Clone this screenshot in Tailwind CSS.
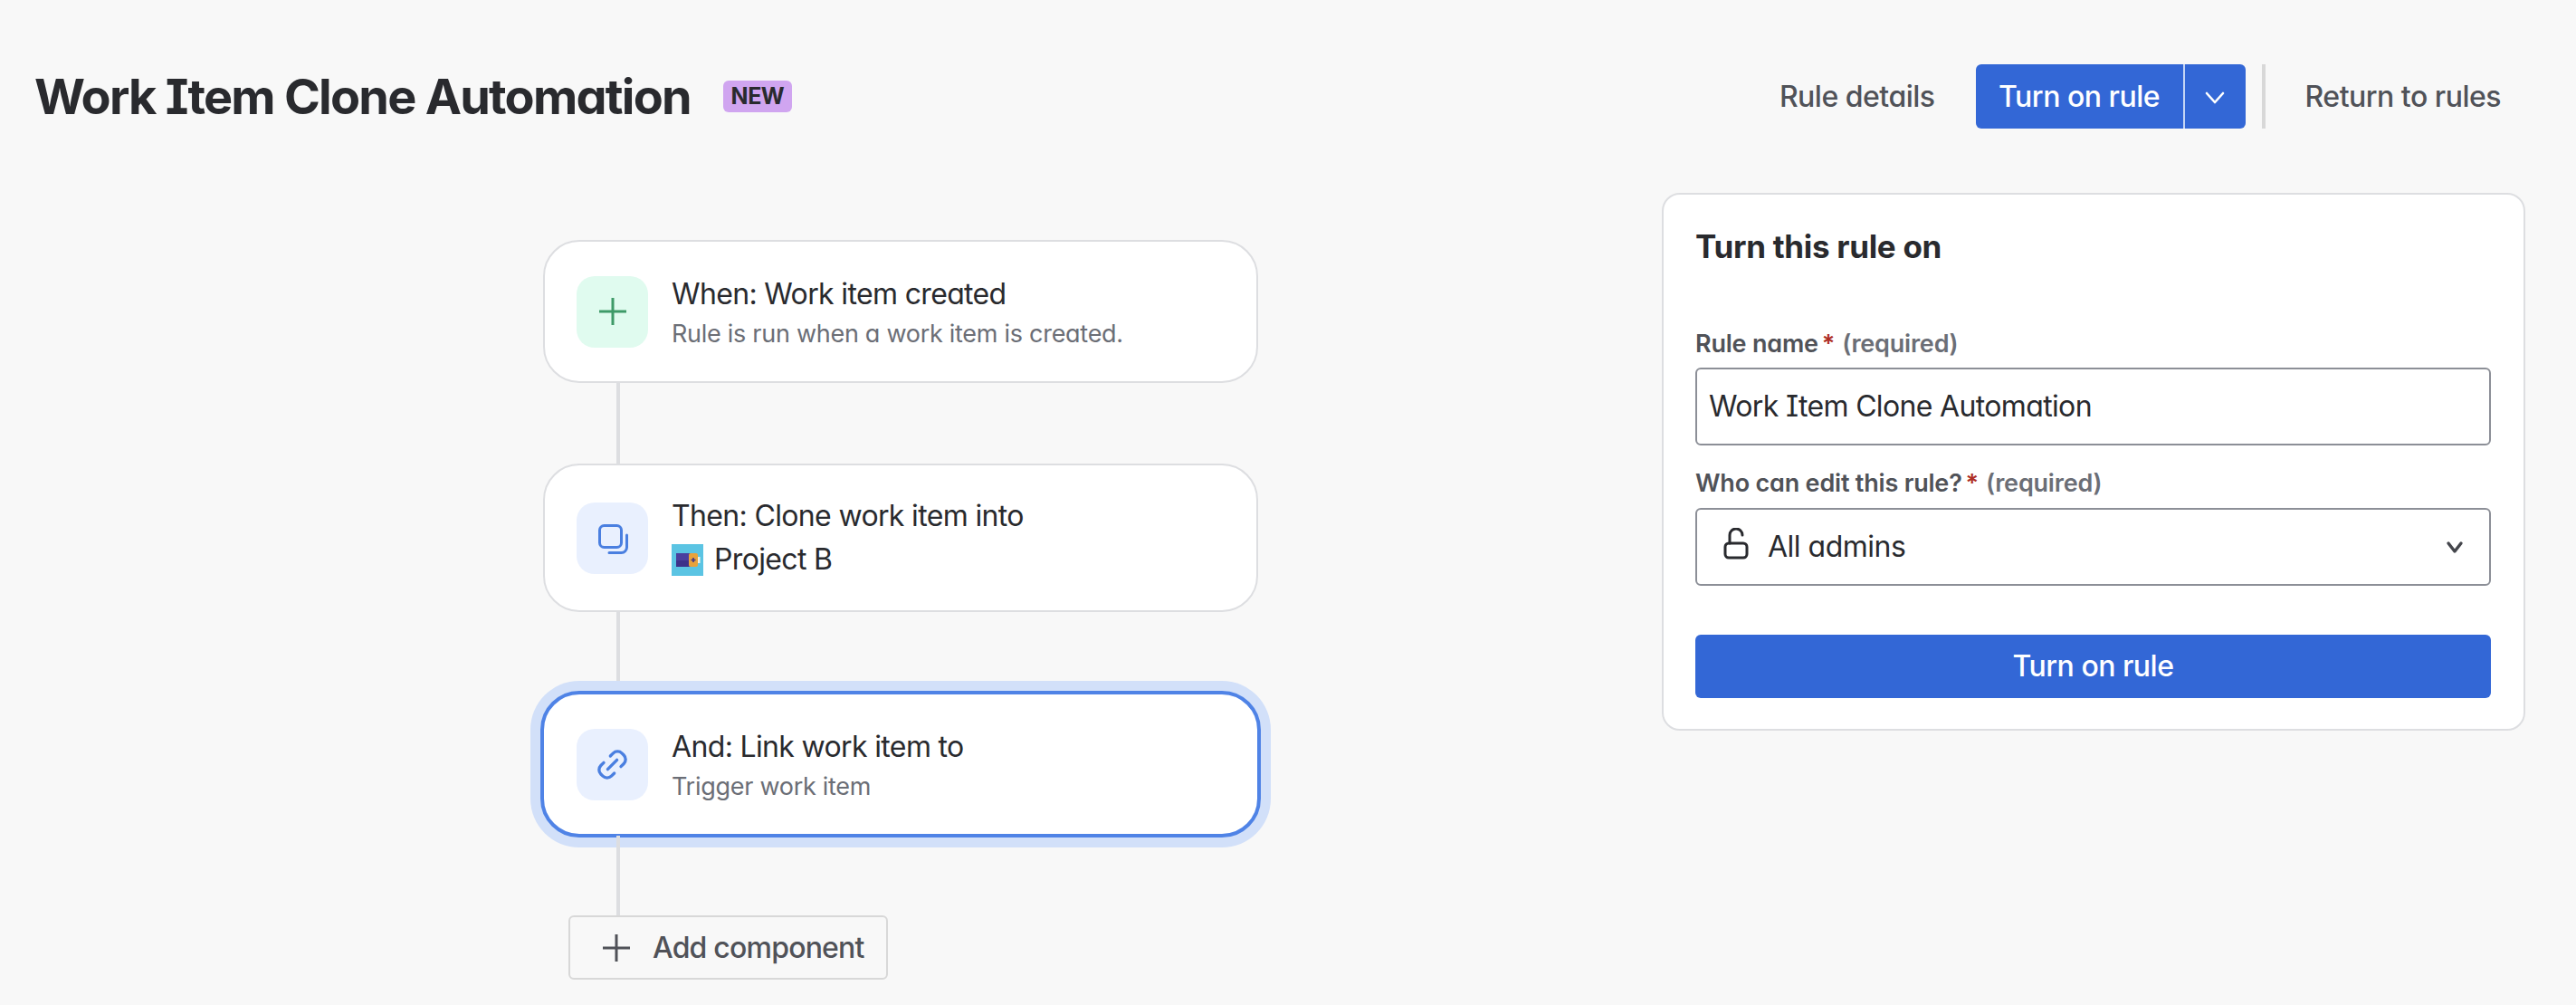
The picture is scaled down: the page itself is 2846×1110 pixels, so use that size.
<!DOCTYPE html>
<html lang="en">
<head>
    <meta charset="UTF-8">
    <title>Work Item Clone Automation</title>
    <script src="https://cdn.jsdelivr.net/npm/@tailwindcss/browser@4"></script>
</head>
<body class="bg-[#f8f8f8] font-[Inter,sans-serif] [font-feature-settings:'cv11','cv08'] text-[#292a2e] h-screen overflow-hidden">

    <!-- Header -->
    <header class="flex items-center justify-between pl-[38px] pr-[83px] pt-[71px]">
        <div class="flex items-center">
            <h1 class="text-[54px] leading-[71px] font-bold tracking-[-1.75px]">Work Item Clone Automation</h1>
            <span class="ml-[36px] flex items-center justify-center w-[76px] h-[35px] rounded-[6px] bg-[#d0a5f0] text-[25px] font-bold tracking-[-0.5px]">NEW</span>
        </div>
        <div class="flex items-center h-[71px] tracking-[-0.5px]">
            <span class="text-[32px] font-medium text-[#505258]">Rule details</span>
            <div class="ml-[45px] flex h-[71px] w-[298px] rounded-[6px] bg-[#3367d6] text-white">
                <span class="flex items-center justify-center w-[229px] text-[32px] font-medium">Turn on rule</span>
                <span class="flex items-center justify-center flex-1 border-l-2 border-[#c5d5f4]">
                    <svg class="w-[24px] h-[24px]" viewBox="0 0 24 24" fill="none" stroke="currentColor" stroke-width="2.6" stroke-linecap="round" stroke-linejoin="round"><path d="M3 8l9 10 9-10"/></svg>
                </span>
            </div>
            <div class="ml-[18px] w-[4px] h-[71px] bg-[#d8d8d8]"></div>
            <span class="ml-[44px] text-[32px] font-medium text-[#505258]">Return to rules</span>
        </div>
    </header>

    <main class="flex pl-[600px]">
        <!-- Rule flow -->
        <div class="w-[790px] pt-[123px]">
            <div class="flex items-center h-[158px] px-[35px] rounded-[40px] border-2 border-[#dddee1] bg-white">
                <div class="flex items-center justify-center w-[79px] h-[79px] shrink-0 rounded-[20px] bg-[#e0fbef]">
                    <svg class="w-[32px] h-[32px]" viewBox="0 0 32 32" fill="none" stroke="#3e9a68" stroke-width="3"><path d="M16 1v30M1 16h30"/></svg>
                </div>
                <div class="ml-[26px] pt-[3px]">
                    <p class="text-[32px] leading-[42px] tracking-[-0.65px]">When: Work item created</p>
                    <p class="mt-[5px] text-[27px] leading-[36px] tracking-[-0.28px] text-[#6b6e76]">Rule is run when a work item is created.</p>
                </div>
            </div>
            <div class="ml-[81px] w-[4px] h-[89px] bg-[#dddee1]"></div>
            <div class="flex items-center h-[164px] px-[35px] rounded-[40px] border-2 border-[#dddee1] bg-white">
                <div class="flex items-center justify-center w-[79px] h-[79px] shrink-0 rounded-[20px] bg-[#e9f0fe]">
                    <svg class="w-[33px] h-[33px] ml-[2px] mt-[2px]" viewBox="0 0 33 33" fill="none" stroke="#4a7fe0" stroke-width="3" stroke-linecap="round"><rect x="1.5" y="1.5" width="24" height="24" rx="5"/><path d="M31.5 12v13.5a6 6 0 0 1-6 6H12"/></svg>
                </div>
                <div class="ml-[26px] pb-[3px]">
                    <p class="text-[32px] leading-[42px] tracking-[-0.65px]">Then: Clone work item into</p>
                    <div class="mt-[9px] flex items-center">
                        <svg class="w-[35px] h-[35px] shrink-0" viewBox="0 0 35 35"><rect width="35" height="35" fill="#5bc4e3"/><rect x="29" y="14" width="2.5" height="7" fill="#f4f1e4"/><rect x="5" y="10" width="16" height="15" fill="#4b3f9e"/><rect x="19" y="10" width="10" height="15" rx="2" fill="#e9a23b"/><rect x="5" y="18" width="14" height="7" fill="#3d3189"/><path d="M24 15v5M21.5 17.5h5" stroke="#3d3189" stroke-width="1.6"/></svg>
                        <span class="ml-[12px] text-[32px] leading-[36px] tracking-[-0.65px]">Project B</span>
                    </div>
                </div>
            </div>
            <div class="ml-[81px] w-[4px] h-[87px] bg-[#dddee1]"></div>
            <div class="-mx-[3px] flex items-center h-[162px] px-[36px] rounded-[43px] border-4 border-[#4f83e6] bg-white shadow-[0_0_0_11px_#d2e0f9]">
                <div class="flex items-center justify-center w-[79px] h-[79px] shrink-0 rounded-[20px] bg-[#e9f0fe]">
                    <svg class="w-[35px] h-[35px]" viewBox="0 0 24 24" fill="none" stroke="#4a7fe0" stroke-width="2.3" stroke-linecap="round" stroke-linejoin="round"><path d="M10.5 5.5l2.2-2.2a4.6 4.6 0 0 1 6.5 0l1.5 1.5a4.6 4.6 0 0 1 0 6.5l-2.2 2.2"/><path d="M13.5 18.5l-2.2 2.2a4.6 4.6 0 0 1-6.5 0l-1.5-1.5a4.6 4.6 0 0 1 0-6.5l2.2-2.2"/><path d="M8.5 15.5l7-7"/></svg>
                </div>
                <div class="ml-[26px] pt-[3px]">
                    <p class="text-[32px] leading-[42px] tracking-[-0.65px]">And: Link work item to</p>
                    <p class="mt-[5px] text-[27px] leading-[36px] tracking-[-0.28px] text-[#6b6e76]">Trigger work item</p>
                </div>
            </div>
            <div class="ml-[81px] -mt-[2px] w-[4px] h-[88px] bg-[#dddee1]"></div>
            <div class="ml-[28px] flex items-center w-[353px] h-[71px] rounded-[6px] border-2 border-[#d8d8d8] text-[#505258]">
                <svg class="ml-[35px] w-[32px] h-[32px] shrink-0" viewBox="0 0 32 32" fill="none" stroke="currentColor" stroke-width="3"><path d="M16 1v30M1 16h30"/></svg>
                <span class="ml-[24px] text-[32px] font-medium tracking-[-0.8px]">Add component</span>
            </div>
        </div>

        <!-- Turn on panel -->
        <section class="ml-[446px] mt-[71px] w-[954px] h-[594px] pl-[35px] pr-[36px] rounded-[20px] border-2 border-[#dddee1] bg-white">
            <h2 class="pt-[33px] text-[35px] leading-[48px] font-bold tracking-[-0.3px]">Turn this rule on</h2>

            <label class="mt-[66px] flex items-center h-[36px] text-[27px] font-semibold tracking-[-0.2px] text-[#505258]">
                Rule name<span class="ml-[4px] text-[#ae2e24]">*</span>
                <span class="ml-[8px] text-[#6b6e76]">(required)</span>
            </label>
            <div class="mt-[8px] flex items-center h-[86px] pl-[13px] rounded-[6px] border-2 border-[#8c8f97] text-[32px] tracking-[-0.65px]">Work Item Clone Automation</div>

            <label class="mt-[24px] flex items-center h-[36px] text-[27px] font-semibold tracking-[-0.2px] text-[#505258]">
                Who can edit this rule?<span class="ml-[4px] text-[#ae2e24]">*</span>
                <span class="ml-[8px] text-[#6b6e76]">(required)</span>
            </label>
            <div class="mt-[9px] flex items-center h-[86px] pl-[29px] pr-[28px] rounded-[6px] border-2 border-[#8c8f97] text-[32px] tracking-[-0.5px]">
                <svg class="w-[28px] h-[35px] -mt-[8px] shrink-0" viewBox="0 0 28 35" fill="none" stroke="#292a2e" stroke-width="3" stroke-linecap="round"><rect x="2" y="17" width="24" height="16" rx="4"/><path d="M7 17V8a7 7 0 0 1 14 0"/></svg>
                <span class="ml-[21px]">All admins</span>
                <svg class="ml-auto w-[20px] h-[20px]" viewBox="0 0 20 20" fill="none" stroke="#44464c" stroke-width="3.4" stroke-linecap="round" stroke-linejoin="round"><path d="M3 6l7 9 7-9"/></svg>
            </div>

            <button class="mt-[54px] flex items-center justify-center w-full h-[70px] rounded-[6px] bg-[#3367d6] text-white text-[32px] font-medium tracking-[-0.5px]">Turn on rule</button>
        </section>
    </main>

</body>
</html>
